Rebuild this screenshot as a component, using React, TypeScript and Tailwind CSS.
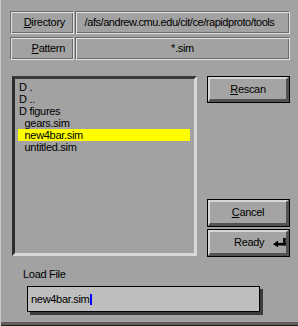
import React from "react";

const etched =
  "border border-t-[#6a6a6a] border-l-[#6a6a6a] border-b-[#e2e2e2] border-r-[#e2e2e2] shadow-[inset_1px_1px_0_#e2e2e2,inset_-1px_-1px_0_#6a6a6a]";

function Btn({ children, className = "" }: { children: React.ReactNode; className?: string }) {
  return (
    <div className={"border border-black bg-[#a4a4a4] " + className}>
      <div className="h-full w-full border-t-2 border-l-2 border-b-[3px] border-r-[3px] border-t-[#d6d6d6] border-l-[#d6d6d6] border-b-[#525252] border-r-[#525252] flex items-center justify-center">
        {children}
      </div>
    </div>
  );
}

export default function App() {
  const items: { t: string; sel?: boolean }[] = [
    { t: "D ." },
    { t: "D .." },
    { t: "D figures" },
    { t: "\u00a0 gears.sim" },
    { t: "\u00a0 new4bar.sim", sel: true },
    { t: "\u00a0 untitled.sim" },
  ];
  return (
    <div
      className="w-[298px] h-[326px] bg-[#a2a2a2] border-l border-l-[#c8c8c8] flex flex-col text-black text-[11px] tracking-[-0.3px] overflow-hidden"
      style={{ fontFamily: '"Liberation Sans", Arial, sans-serif' }}
    >
      <div className="flex-1 flex flex-col">
        {/* Top rows */}
        <div className="pt-[11px] pl-[9px] pr-[8px] flex flex-col gap-[3px]">
          <div className="flex gap-[1px] h-[23px]">
            <div className={"w-[64px] flex items-center justify-end pr-[8px] " + etched}>
              <span><span className="underline">D</span>irectory</span>
            </div>
            <div className={"flex-1 flex items-center justify-center pr-[6px] tracking-[-0.45px] " + etched}>
              /afs/andrew.cmu.edu/cit/ce/rapidproto/tools
            </div>
          </div>
          <div className="flex gap-[1px] h-[23px]">
            <div className={"w-[64px] flex items-center justify-end pr-[8px] " + etched}>
              <span><span className="underline">P</span>attern</span>
            </div>
            <div className={"flex-1 flex items-center justify-center " + etched}>*.sim</div>
          </div>
        </div>

        {/* Middle */}
        <div className="mt-[16px] pl-[11px] flex gap-[10px]">
          <div className="w-[185px] h-[180px] border-[3px] border-t-[#3a3a3a] border-l-[#2c2c2c] border-b-[#d8d8d8] border-r-[#d8d8d8] pt-[2px] pl-[3px] pr-[4px]">
            {items.map((it, i) => (
              <div
                key={i}
                className={"h-[12px] leading-[12px] whitespace-pre pl-[1px] " + (it.sel ? "bg-[#ffff00]" : "")}
              >
                {it.t}
              </div>
            ))}
          </div>
          <div className="w-[83px] h-[181px] flex flex-col justify-between">
            <Btn className="h-[27px]">
              <span><span className="underline">R</span>escan</span>
            </Btn>
            <div className="flex flex-col gap-[2px]">
              <Btn className="h-[28px]">
                <span><span className="underline">C</span>ancel</span>
              </Btn>
              <Btn className="h-[28px]">
                <div className="flex items-center gap-[9px] pl-[24px] w-full">
                  <span>Ready</span>
                  <svg width="15" height="11" viewBox="0 0 15 11">
                    <polygon points="0,7.5 6,3 6,11" fill="#000" />
                    <rect x="5" y="6" width="10" height="3" fill="#000" />
                    <rect x="12" y="0" width="3" height="9" fill="#000" />
                  </svg>
                </div>
              </Btn>
            </div>
          </div>
        </div>

        {/* Load file */}
        <div className="mt-[11px] pl-[22px] leading-[13px]">Load File</div>
        <div className="mt-[5px] pl-[26px]">
          <div className="w-[233px] h-[26px] bg-[#bebebe] border border-black shadow-[3px_3px_0_#3c3c3c] flex items-center pl-[3px]">
            <span>new4bar.sim</span>
            <span className="inline-block w-[2px] h-[11px] bg-[#0000ff] ml-[1px]" />
          </div>
        </div>
      </div>
      <div className="h-[3px] bg-[#5e5e5e]" />
      <div className="h-[1px] bg-[#1e1e1e]" />
    </div>
  );
}
